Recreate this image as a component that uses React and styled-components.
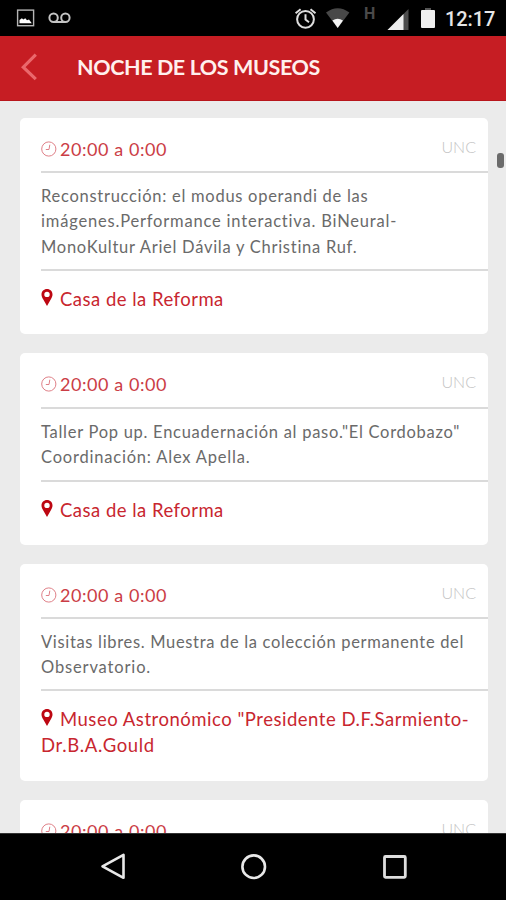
import React from 'react';
import styled, { createGlobalStyle } from 'styled-components';

const events = [
    {
        time: '20:00 a 0:00',
        owner: 'UNC',
        headHeight: 55,
        bodyHeight: 98,
        footHeight: 63,
        description: [
            { text: 'Reconstrucción: el modus operandi de las', spacing: 0.72 },
            { text: 'imágenes.Performance interactiva. BiNeural-', spacing: 0.81 },
            { text: 'MonoKultur Ariel Dávila y Christina Ruf.', spacing: 0.73 },
        ],
        place: [{ text: 'Casa de la Reforma', spacing: 0.48 }],
    },
    {
        time: '20:00 a 0:00',
        owner: 'UNC',
        headHeight: 56,
        bodyHeight: 73,
        footHeight: 63,
        description: [
            { text: 'Taller Pop up. Encuadernación al paso."El Cordobazo"', spacing: 0.72 },
            { text: 'Coordinación: Alex Apella.', spacing: 0.8 },
        ],
        place: [{ text: 'Casa de la Reforma', spacing: 0.48 }],
    },
    {
        time: '20:00 a 0:00',
        owner: 'UNC',
        headHeight: 55,
        bodyHeight: 72,
        footHeight: 90,
        description: [
            { text: 'Visitas libres. Muestra de la colección permanente del', spacing: 0.67 },
            { text: 'Observatorio.', spacing: 0.85 },
        ],
        place: [
            { text: 'Museo Astronómico "Presidente D.F.Sarmiento-', spacing: 0.52 },
            { text: 'Dr.B.A.Gould', spacing: 0.66 },
        ],
    },
    {
        time: '20:00 a 0:00',
        owner: 'UNC',
        headHeight: 55,
        bodyHeight: 72,
        footHeight: 63,
        description: [],
        place: [],
    },
];

// styles
const GlobalStyle = createGlobalStyle`
    * {
        box-sizing: border-box;
    }

    body {
        margin: 0;
        background: #000;
        font-family: Lato, 'Liberation Sans', sans-serif;
    }
`;

const Screen = styled.div`
    display: flex;
    flex-direction: column;
    width: 506px;
    height: 900px;
    overflow: hidden;
    background: #000;
`;

const StatusBar = styled.div`
    display: flex;
    justify-content: space-between;
    flex: none;
    height: 36px;
    color: #e6e6e6;

    svg {
        display: block;
    }
`;

const Clock = styled.span`
    width: 61px;
    padding-top: 7px;
    font: 500 20px/24px Roboto, sans-serif;
    letter-spacing: -0.1px;
`;

const StatusIcons = styled.div`
    display: flex;
`;

const NetworkType = styled.span`
    width: 23px;
    margin-left: 2px;
    padding-top: 4px;
    color: #4a4a4a;
    font: 700 16px/19px Roboto, sans-serif;
`;

const TitleBar = styled.header`
    display: flex;
    align-items: center;
    flex: none;
    height: 65px;
    padding: 0 0 3px 20px;
    background: #c61d23;
    border-bottom: 1px solid #b8161c;
`;

const Title = styled.h1`
    margin: 0 0 0 37px;
    color: #fff0ee;
    font-size: 21.5px;
    font-weight: 700;
    line-height: 26px;
    letter-spacing: -0.4px;
    white-space: nowrap;
`;

const Content = styled.main`
    position: relative;
    display: flex;
    flex-direction: column;
    gap: 19px;
    flex: none;
    height: 732px;
    padding: 17px 18px 0 20px;
    overflow: hidden;
    background: #ebebeb;
`;

const ScrollThumb = styled.div`
    position: absolute;
    top: 52px;
    right: 2px;
    width: 7px;
    height: 15px;
    border-radius: 3px;
    background: #6b6b6b;
`;

const Card = styled.article`
    flex: none;
    width: 468px;
    padding-left: 21px;
    border-radius: 5px;
    background: #fff;
`;

const CardHead = styled.div`
    display: flex;
    justify-content: space-between;
    height: ${({ $height }) => $height}px;
    padding: 19px 12px 0 0;
    border-bottom: 2px solid #dadada;
`;

const Time = styled.div`
    display: flex;
    gap: 3px;
    color: #cb3d46;
    font-size: 18px;
    line-height: 24px;
    letter-spacing: 0.57px;
    white-space: nowrap;

    svg {
        margin-top: 4px;
    }
`;

const Owner = styled.span`
    color: #c4c4c4;
    font-size: 16px;
    font-weight: 300;
    line-height: 19px;
`;

const Description = styled.div`
    height: ${({ $height }) => $height}px;
    padding-top: 11px;
    border-bottom: 2px solid #dadada;
    color: #6a6a6a;
    font-size: 16.5px;
    line-height: 25.3px;
`;

const Place = styled.div`
    height: ${({ $height }) => $height}px;
    padding-top: 15px;
    color: #c8262f;
    font-size: 18.5px;
    line-height: 26.4px;

    svg {
        margin-right: 7px;
    }
`;

const Line = styled.div`
    letter-spacing: ${({ $spacing }) => $spacing}px;
    white-space: nowrap;
`;

const NavigationBar = styled.nav`
    display: flex;
    flex: 1;
    align-items: center;
    justify-content: center;
    gap: 112.5px;
    padding-left: 2px;
    border-top: 1px solid #333;
    background: #000;
`;

// icons
const PictureIcon = () => (
    <svg width="46" height="36" viewBox="0 0 46 36">
        <rect x="17.6" y="10.1" width="16" height="15.6" fill="none" stroke="#b5b5b5" strokeWidth="1.4" />
        <path d="M19.5 23.3V20l2.4-1.8 1.4 1.2 2-1.1 1.7 2 2-.8 2.8 3.8z" fill="#fff" />
    </svg>
);

const VoicemailIcon = () => (
    <svg width="28" height="36" viewBox="0 0 28 36">
        <g fill="none" stroke="#c4c4c4" strokeWidth="2">
            <circle cx="7.6" cy="17.7" r="4.2" />
            <circle cx="19.400" cy="17.7" r="4.2" />
            <path d="M7.6 22h11.800" />
        </g>
    </svg>
);

const AlarmIcon = () => (
    <svg width="31" height="36" viewBox="0 0 31 36">
        <g fill="none" stroke="#dedede" strokeWidth="2">
            <circle cx="11.5" cy="19.3" r="8.4" />
            <path d="M11.5 14.2v5.3l3.5 2.7M1.6 13.3l5-4M16.5 9.3l5 4" />
        </g>
    </svg>
);

const WifiIcon = () => (
    <svg width="37" height="36" viewBox="0 0 37 36">
        <path d="M1 12.5Q12.7 3.8 24.4 12.5L12.7 28z" fill="#484848" />
        <path d="M7.4 20.4q5.3-3.3 10.6 0L12.7 28z" fill="#f4f4f4" />
    </svg>
);

const SignalIcon = () => (
    <svg width="33" height="36" viewBox="0 0 33 36">
        <path d="M21.500 9V30H.5z" fill="#4c4c4c" />
        <path d="M16.500 14V30H.5z" fill="#ededed" />
    </svg>
);

const BatteryIcon = () => (
    <svg width="25" height="36" viewBox="0 0 25 36">
        <path d="M5 8h6v2.5H5z" fill="#555" />
        <rect x="1" y="10" width="14" height="18" rx="1" fill="#efefef" />
    </svg>
);

const BackIcon = () => (
    <svg width="20" height="28" viewBox="0 0 20 28">
        <path d="M15.8 1.7L3.3 14.2l12.5 12" fill="none" stroke="#ea686c" strokeWidth="3.2" />
    </svg>
);

const ClockIcon = () => (
    <svg width="16" height="16" viewBox="0 0 16 16">
        <g fill="none" stroke="#df8088" strokeWidth="1">
            <circle cx="7.8" cy="8" r="7.1" />
            <path d="M8.8 3.7L8 8.5H4.8" />
        </g>
    </svg>
);

const PinIcon = () => (
    <svg width="12" height="17" viewBox="0 0 12 17">
        <path
            d="M6 0C2.8 0 .5 2.3.5 5.4.5 7 1.2 8.5 2 10l4 7 4-7c.8-1.5 1.5-3 1.5-4.6C11.5 2.3 9.2 0 6 0zm0 2.7a2.7 2.7 0 110 5.4 2.7 2.7 0 010-5.4z"
            fill="#bd0712"
            fillRule="evenodd"
        />
    </svg>
);

const NavBackIcon = () => (
    <svg width="28" height="28" viewBox="0 0 28 28">
        <path d="M23.5 1.8v23L2.5 13.3z" fill="none" stroke="#e8e8e8" strokeWidth="2.6" strokeLinejoin="round" />
    </svg>
);

const NavHomeIcon = () => (
    <svg width="28" height="28" viewBox="0 0 28 28">
        <circle cx="13.7" cy="13.7" r="11.3" fill="none" stroke="#e8e8e8" strokeWidth="2.6" />
    </svg>
);

const NavRecentIcon = () => (
    <svg width="28" height="28" viewBox="0 0 28 28">
        <rect x="3.5" y="3.5" width="20.8" height="20.8" rx="1" fill="none" stroke="#dedede" strokeWidth="2.8" />
    </svg>
);

const EventCard = ({ event }) => (
    <Card>
        <CardHead $height={event.headHeight}>
            <Time>
                <ClockIcon />
                {event.time}
            </Time>
            <Owner>{event.owner}</Owner>
        </CardHead>
        <Description $height={event.bodyHeight}>
            {event.description.map(line => (
                <Line key={line.text} $spacing={line.spacing}>
                    {line.text}
                </Line>
            ))}
        </Description>
        <Place $height={event.footHeight}>
            {event.place.map((line, index) => (
                <Line key={line.text} $spacing={line.spacing}>
                    {index === 0 && <PinIcon />}
                    {line.text}
                </Line>
            ))}
        </Place>
    </Card>
);

const App = () => (
    <>
        <GlobalStyle />
        <Screen>
            <StatusBar>
                <StatusIcons>
                    <PictureIcon />
                    <VoicemailIcon />
                </StatusIcons>
                <StatusIcons>
                    <AlarmIcon />
                    <WifiIcon />
                    <NetworkType>H</NetworkType>
                    <SignalIcon />
                    <BatteryIcon />
                    <Clock>12:17</Clock>
                </StatusIcons>
            </StatusBar>
            <TitleBar>
                <BackIcon />
                <Title>NOCHE DE LOS MUSEOS</Title>
            </TitleBar>
            <Content>
                {events.map((event, index) => (
                    <EventCard key={index} event={event} />
                ))}
                <ScrollThumb />
            </Content>
            <NavigationBar>
                <NavBackIcon />
                <NavHomeIcon />
                <NavRecentIcon />
            </NavigationBar>
        </Screen>
    </>
);

export default App;
